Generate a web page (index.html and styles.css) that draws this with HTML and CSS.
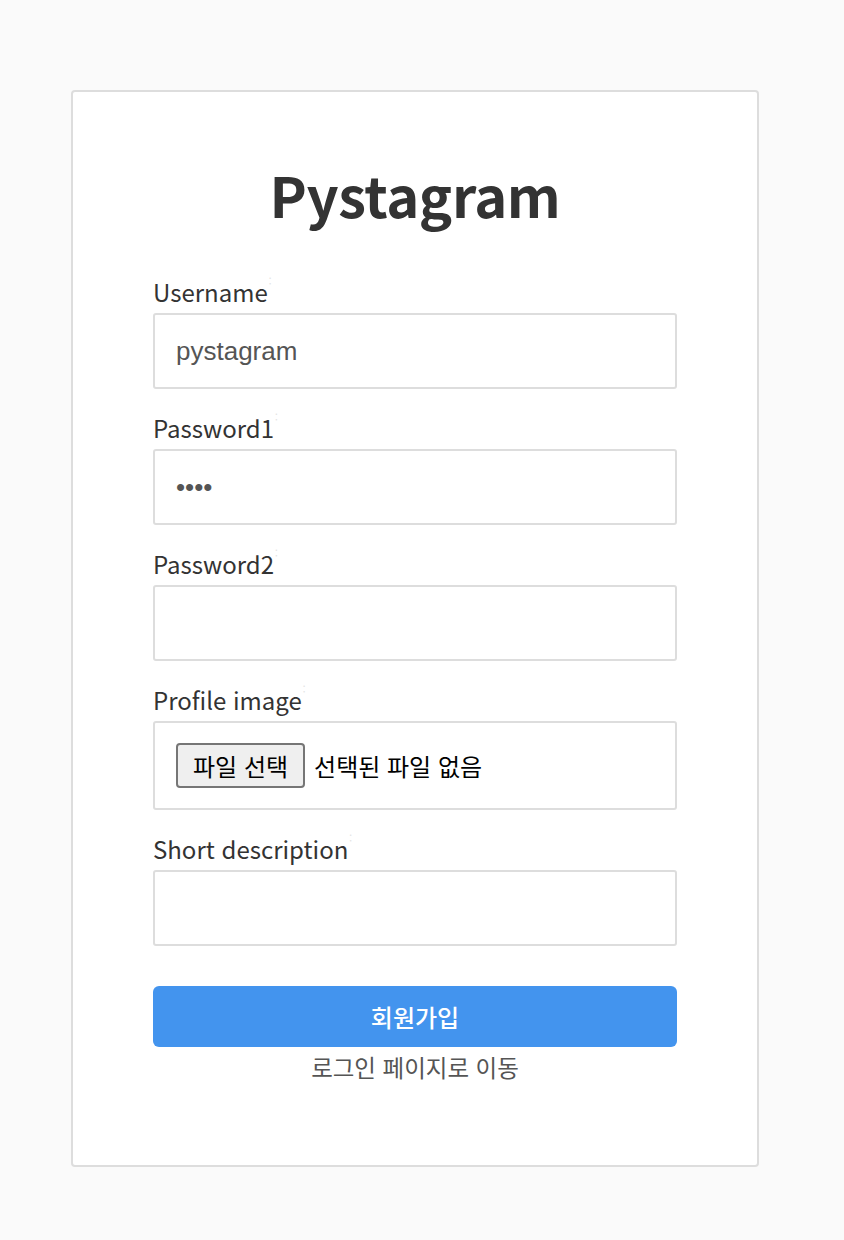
FILE: index.html
```html
<!DOCTYPE html>
<html lang="ko">
<head>
<meta charset="utf-8">
<title>Pystagram</title>
<link rel="stylesheet" href="styles.css">
</head>
<body>
<main class="card">
  <h1 class="title">Pystagram</h1>
  <form class="form">
    <div class="field">
      <label class="label">Username<span class="colon">:</span></label>
      <div class="input"><span class="value">pystagram</span></div>
    </div>
    <div class="field">
      <label class="label">Password1<span class="colon">:</span></label>
      <div class="input"><span class="dots">••••</span></div>
    </div>
    <div class="field">
      <label class="label">Password2<span class="colon">:</span></label>
      <div class="input"></div>
    </div>
    <div class="field">
      <label class="label">Profile image<span class="colon">:</span></label>
      <div class="input file">
        <span class="file-btn">파일 선택</span>
        <span class="file-text">선택된 파일 없음</span>
      </div>
    </div>
    <div class="field">
      <label class="label">Short description<span class="colon">:</span></label>
      <div class="input"></div>
    </div>
    <button type="button" class="submit">회원가입</button>
    <a class="link">로그인 페이지로 이동</a>
  </form>
</main>
</body>
</html>
```

FILE: styles.css
```css
html, body {
  margin: 0;
  padding: 0;
  background: #fafafa;
}
body {
  padding: 90px 0 0 71px;
  font-family: "Noto Sans CJK KR", "Noto Sans", sans-serif;
  color: #333;
}
.card {
  box-sizing: border-box;
  width: 688px;
  height: 1077px;
  background: #fff;
  border: 2px solid #dddddd;
  border-radius: 4px;
  padding: 0 80px;
}
.title {
  margin: 60px 0 0;
  text-align: center;
  font-size: 56px;
  font-weight: 700;
  line-height: 84px;
  color: #333;
  letter-spacing: -0.4px;
}
.form {
  margin-top: 40px;
  display: flex;
  flex-direction: column;
}
.field {
  display: flex;
  flex-direction: column;
  margin-bottom: 23px;
}
.label {
  display: block;
  height: 31px;
  margin-bottom: 6px;
  font-size: 24px;
  line-height: 31px;
  color: #333;
}
.colon {
  color: #e2e2e2;
  font-size: 10px;
  line-height: 1;
  vertical-align: top;
  margin-left: 1px;
}
.input {
  box-sizing: border-box;
  height: 76px;
  border: 2px solid #dddddd;
  border-radius: 3px;
  padding: 0 21px;
  display: flex;
  align-items: center;
}
.value {
  font-family: "Liberation Sans", Arial, sans-serif;
  font-size: 26px;
  color: #555;
}
.dots {
  font-family: "Liberation Sans", Arial, sans-serif;
  font-size: 26px;
  color: #555;
}
.input.file {
  height: 89px;
  gap: 9px;
}
.file-btn {
  box-sizing: border-box;
  height: 45px;
  padding: 0 15px;
  border: 2px solid #767676;
  border-radius: 4px;
  background: #efefef;
  font-size: 24px;
  color: #000;
  display: flex;
  align-items: center;
}
.file-text {
  font-size: 24px;
  color: #000;
}
.submit {
  margin-top: 17px;
  height: 61px;
  border: none;
  border-radius: 6px;
  background: #4394ee;
  color: #fff;
  font-family: "Noto Sans CJK KR", sans-serif;
  font-size: 24px;
  font-weight: 500;
}
.link {
  margin-top: 4px;
  text-align: center;
  font-size: 23.5px;
  line-height: 32px;
  color: #555;
}
```
